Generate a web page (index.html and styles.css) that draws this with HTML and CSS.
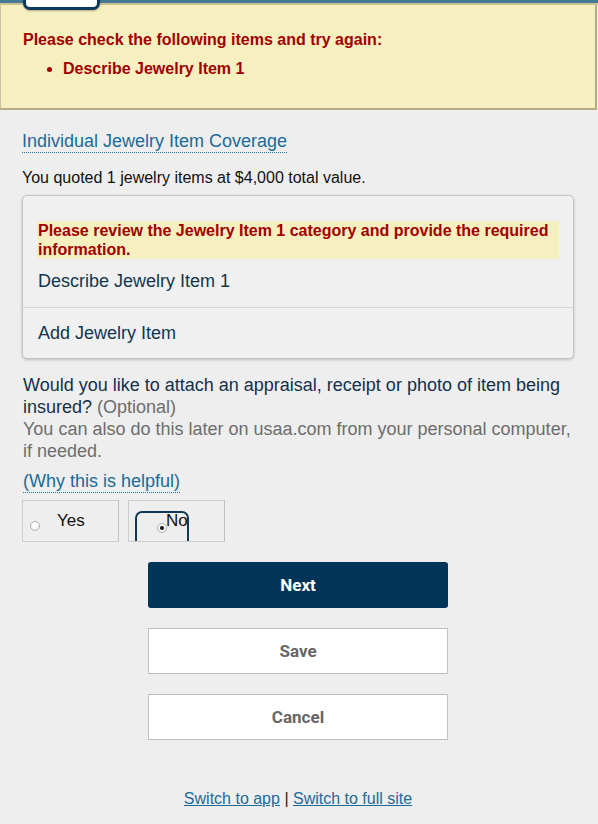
FILE: index.html
```html
<!DOCTYPE html>
<html>
<head>
<meta charset="utf-8">
<link rel="stylesheet" href="styles.css">
</head>
<body>
<div class="topbar"></div>
<div class="tab"></div>
<div class="alert">
  <p class="alert-title">Please check the following items and try again:</p>
  <ul class="alert-list">
    <li>Describe Jewelry Item 1</li>
  </ul>
</div>
<main class="content">
  <h2 class="section-title"><span class="dotted">Individual Jewelry Item Coverage</span></h2>
  <p class="quote">You quoted 1 jewelry items at $4,000 total value.</p>
  <div class="card">
    <div class="card-item first">
      <div class="card-error">Please review the Jewelry Item 1 category and provide the required information.</div>
      <div class="card-label">Describe Jewelry Item 1</div>
    </div>
    <div class="card-item">
      <div class="card-label">Add Jewelry Item</div>
    </div>
  </div>
  <p class="question">Would you like to attach an appraisal, receipt or photo of item being insured? <span class="optional">(Optional)</span><br><span class="hint">You can also do this later on usaa.com from your personal computer, if needed.</span></p>
  <p class="why"><span class="dotted">(Why this is helpful)</span></p>
  <div class="radios">
    <label class="radio-box"><span class="radio"></span><span class="radio-text">Yes</span></label>
    <label class="radio-box"><span class="focus-ring"><span class="radio checked"></span><span class="radio-text">No</span></span></label>
  </div>
  <div class="buttons">
    <button class="btn primary">Next</button>
    <button class="btn secondary">Save</button>
    <button class="btn secondary">Cancel</button>
  </div>
  <footer class="footer">
    <a class="footlink">Switch to app</a> <span class="sep">|</span> <a class="footlink">Switch to full site</a>
  </footer>
</main>
</body>
</html>
```
FILE: styles.css
```css
html, body {
  margin: 0;
  padding: 0;
  background: #eeeeee;
  font-family: "Liberation Sans", Arial, sans-serif;
}
body {
  width: 598px;
  height: 824px;
  overflow: hidden;
  position: relative;
}
.topbar {
  height: 3px;
  background: #447a93;
  border-bottom: 2px solid #cbc195;
}
.tab {
  position: absolute;
  left: 23px;
  top: -6px;
  width: 71px;
  height: 10px;
  background: #ffffff;
  border: 3px solid #0d3a5c;
  border-radius: 7px;
  box-shadow: 0 1px 2px rgba(0,0,0,0.3);
}
.alert {
  background: #f6efbf;
  border-left: 1px solid #c9c2a2;
  border-right: 2px solid #b4aa83;
  border-bottom: 2px solid #b4aa83;
  height: 105px;
  box-sizing: border-box;
  width: 597px;
  padding: 26px 0 0 22px;
  color: #a00000;
  font-weight: bold;
  font-size: 16px;
}
.alert-title {
  margin: 0;
  line-height: 18px;
}
.alert-list {
  margin: 11px 0 0;
  padding-left: 40px;
  line-height: 18px;
}
.content {
  padding: 20px 24px 0 22px;
}
.section-title {
  margin: 0;
  font-weight: normal;
  font-size: 18px;
  line-height: 22px;
  color: #1b6b96;
}
.dotted {
  border-bottom: 1px dotted #1b78b0;
  padding-bottom: 1px;
}
.quote {
  margin: 16px 0 0 0;
  font-size: 16px;
  line-height: 20px;
  color: #111;
}
.card {
  margin-top: 7px;
  background: #f0f0f0;
  border: 1px solid #c4c4c4;
  border-radius: 5px;
  box-shadow: 0 1px 3px rgba(0,0,0,0.2);
}
.card-item {
  padding: 14px 14px 14px;
  border-top: 1px solid #d9d9d9;
}
.card-item.first {
  border-top: none;
  padding-top: 25px;
  padding-bottom: 15px;
}
.card-error {
  background: #f6efbf;
  color: #a00000;
  font-weight: bold;
  font-size: 16px;
  line-height: 19px;
  padding: 0 2px 0 1px;
  margin-bottom: 11px;
}
.card-label {
  font-size: 18px;
  line-height: 22px;
  color: #12364e;
  padding-left: 1px;
}
.question {
  margin: 15px 0 0 1px;
  font-size: 18px;
  line-height: 22px;
  color: #13304c;
}
.optional, .hint {
  color: #6d6d6d;
}
.why {
  margin: 8px 0 0 1px;
  font-size: 18px;
  line-height: 22px;
  color: #1b6b96;
}
.radios {
  display: flex;
  gap: 9px;
  margin-top: 8px;
}
.radio-box {
  width: 95px;
  height: 40px;
  border: 1px solid #cdcdcd;
  border-right-color: #c0c0c0;
  position: relative;
  overflow: hidden;
  display: flex;
  align-items: flex-start;
  font-size: 17px;
  line-height: 20px;
  color: #111;
}
.radio {
  display: inline-block;
  width: 8px;
  height: 8px;
  border-radius: 50%;
  background: radial-gradient(circle at 50% 40%, #ffffff 40%, #e4e4e4 100%);
  border: 1px solid #b0b0b0;
  position: relative;
  flex: none;
}
.radio-box > .radio {
  margin: 20px 0 0 7px;
}
.radio-box > .radio-text {
  margin: 10px 0 0 17px;
}
.radio.checked::after {
  content: "";
  position: absolute;
  left: 2px;
  top: 2px;
  width: 4px;
  height: 4px;
  border-radius: 50%;
  background: #111;
}
.focus-ring {
  position: absolute;
  left: 6px;
  top: 10px;
  width: 54px;
  height: 42px;
  border: 2px solid #0f3a52;
  border-radius: 7px;
  box-sizing: border-box;
}
.focus-ring .radio {
  position: absolute;
  left: 20px;
  top: 10px;
}
.focus-ring .radio-text {
  position: absolute;
  left: 29px;
  top: -2px;
}
.buttons {
  display: flex;
  flex-direction: column;
  align-items: center;
  gap: 20px;
  margin-top: 20px;
}
.btn {
  width: 300px;
  height: 46px;
  font-family: Roboto, "Liberation Sans", sans-serif;
  font-weight: bold;
  font-size: 17px;
  border-radius: 3px;
}
.primary {
  background: #003559;
  color: #fff;
  border: none;
}
.secondary {
  background: #fff;
  color: #666;
  border: 1px solid #bfbfbf;
  border-radius: 0;
}
.footer {
  text-align: center;
  margin-top: 50px;
  font-size: 16px;
  line-height: 18px;
  color: #222;
}
.footlink {
  color: #1b6b96;
  text-decoration: underline;
}
.sep {
  color: #222;
}
```
